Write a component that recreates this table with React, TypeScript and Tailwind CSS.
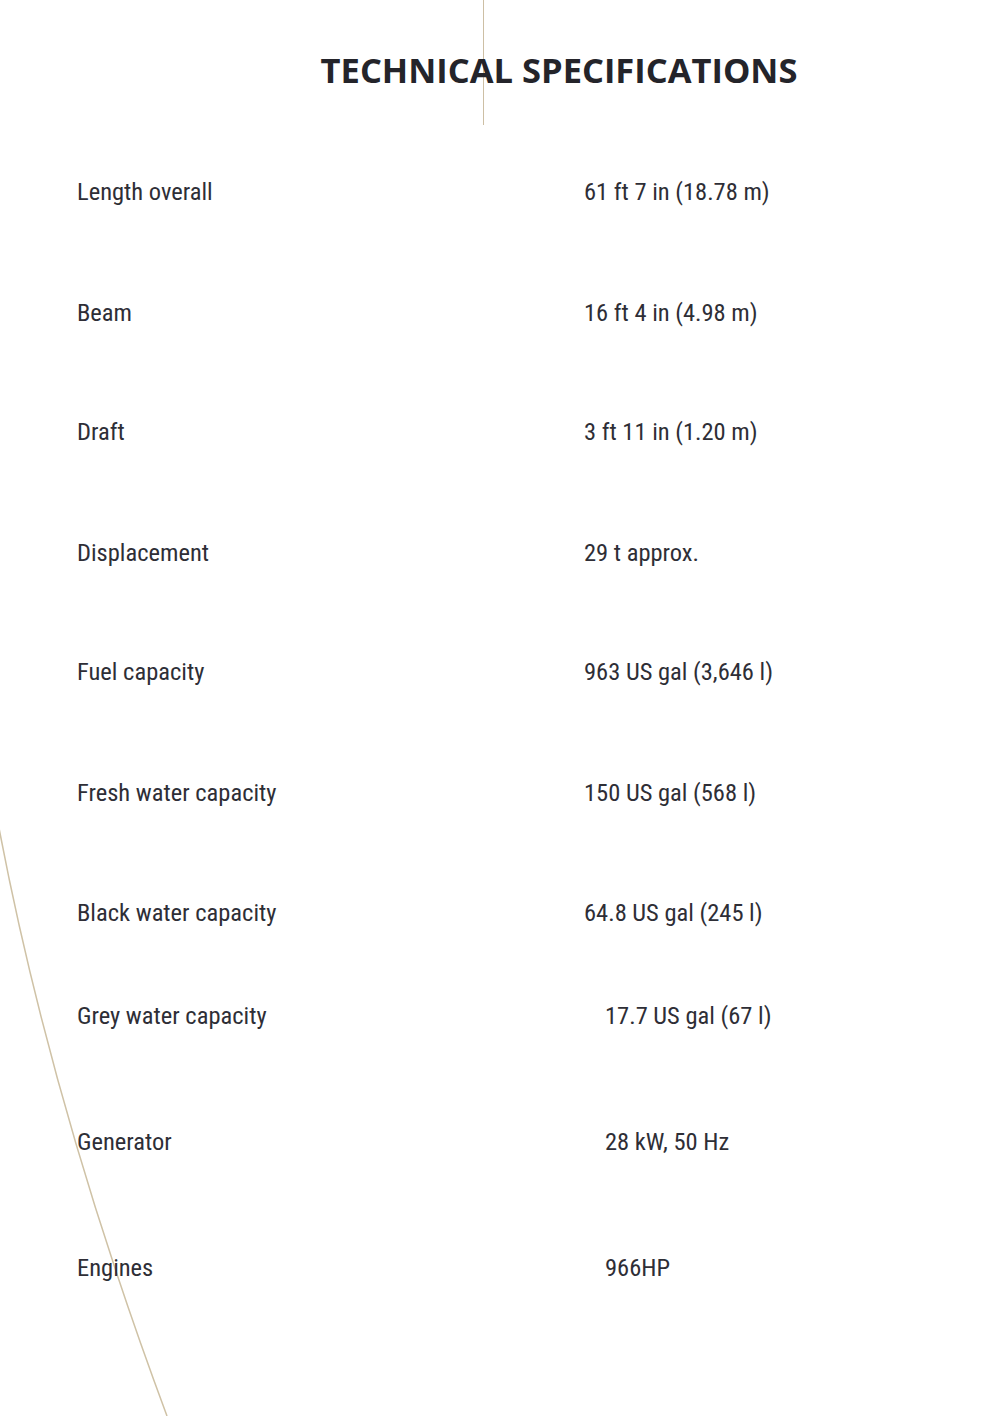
const rows: { label: string; value: string; gap: string; indent: string }[] = [
  { label: "Length overall", value: "61 ft 7 in (18.78 m)", gap: "mt-0", indent: "pl-0" },
  { label: "Beam", value: "16 ft 4 in (4.98 m)", gap: "mt-[91px]", indent: "pl-0" },
  { label: "Draft", value: "3 ft 11 in (1.20 m)", gap: "mt-[89px]", indent: "pl-0" },
  { label: "Displacement", value: "29 t approx.", gap: "mt-[91px]", indent: "pl-0" },
  { label: "Fuel capacity", value: "963 US gal (3,646 l)", gap: "mt-[89px]", indent: "pl-0" },
  { label: "Fresh water capacity", value: "150 US gal (568 l)", gap: "mt-[91px]", indent: "pl-0" },
  { label: "Black water capacity", value: "64.8 US gal (245 l)", gap: "mt-[90px]", indent: "pl-0" },
  { label: "Grey water capacity", value: "17.7 US gal (67 l)", gap: "mt-[73px]", indent: "pl-[21px]" },
  { label: "Generator", value: "28 kW, 50 Hz", gap: "mt-[96px]", indent: "pl-[21px]" },
  { label: "Engines", value: "966HP", gap: "mt-[96px]", indent: "pl-[21px]" },
];

export default function App() {
  return (
    <div className="relative w-[1000px] h-[1416px] overflow-hidden bg-white text-[#2e2e36]">
      <div className="absolute left-[483px] top-0 h-[125px] w-px bg-[#cdbfa4]" />
      <svg className="absolute inset-0 pointer-events-none" width="1000" height="1416" viewBox="0 0 1000 1416">
        <path d="M -1 828 Q 52 1107 167 1416" fill="none" stroke="#cfc2a6" strokeWidth="1.5" />
      </svg>

      <div className="relative flex flex-col">
        <h1 className="mt-[50px] pl-[118px] text-center font-['Open_Sans',sans-serif] text-[34.5px] leading-[40px] font-bold text-[#24242a]">
          TECHNICAL SPECIFICATIONS
        </h1>

        <div className="mt-[87px] flex flex-col pl-[77px] font-['Roboto',sans-serif]">
          {rows.map((r) => (
            <div key={r.label} className={`${r.gap} grid h-[30px] grid-cols-[507px_1fr] items-center text-[24.5px] leading-[30px] font-stretch-condensed`}>
              <div>{r.label}</div>
              <div className={r.indent}>{r.value}</div>
            </div>
          ))}
        </div>
      </div>
    </div>
  );
}
